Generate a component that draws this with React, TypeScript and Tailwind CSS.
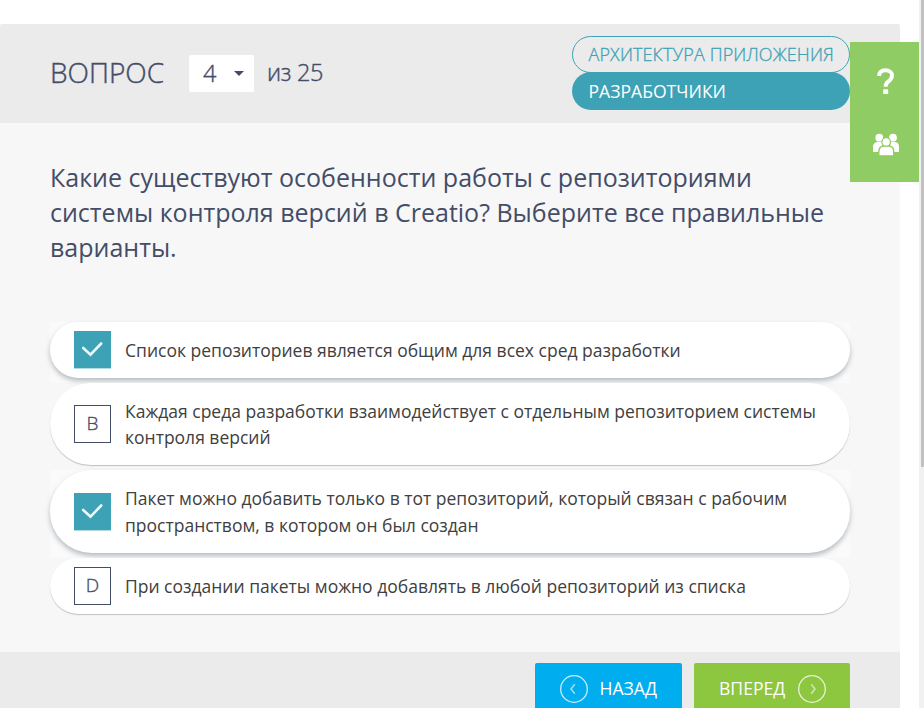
import React from "react";

type Option = { letter: string; lines: string[]; selected: boolean; size: string; text: string; box: string };

const options: Option[] = [
  {
    letter: "A",
    lines: ["Список репозиториев является общим для всех сред разработки"],
    selected: true,
    size: "h-[56px]",
    text: "pt-[15px] leading-[27px]",
    box: "mt-[9px]",
  },
  {
    letter: "B",
    lines: ["Каждая среда разработки взаимодействует с отдельным репозиторием системы", "контроля версий"],
    selected: false,
    size: "h-[82px]",
    text: "pt-[15px] leading-[26px]",
    box: "mt-[22px]",
  },
  {
    letter: "C",
    lines: ["Пакет можно добавить только в тот репозиторий, который связан с рабочим", "пространством, в котором он был создан"],
    selected: true,
    size: "h-[83px]",
    text: "pt-[15px] leading-[27px]",
    box: "mt-[23px]",
  },
  {
    letter: "D",
    lines: ["При создании пакеты можно добавлять в любой репозиторий из списка"],
    selected: false,
    size: "h-[56px]",
    text: "pt-[15px] leading-[27px]",
    box: "mt-[9px]",
  },
];

function Check() {
  return (
    <svg width="37" height="37" viewBox="0 0 37 37" fill="none">
      <path d="M9.2 17L16.5 23.7L27.2 12.500" stroke="#eef8fa" strokeWidth="2.6" strokeLinecap="round" strokeLinejoin="miter" />
    </svg>
  );
}

function OptionRow({ option }: { option: Option }) {
  return (
    <div className={`pb-[5px] ${option.selected ? "bg-[#fafafa]" : ""}`}>
      <div
        className={`flex rounded-full bg-white pl-6 ${option.size} ${
          option.selected ? "shadow-[0_3px_5px_rgba(60,75,90,0.35)]" : "shadow-[0_1px_1px_rgba(60,70,70,0.3)]"
        }`}
      >
        {option.selected ? (
          <div className={`h-[37px] w-[37px] shrink-0 bg-[#3ea2b6] shadow-[0_1px_0_#b2dae2] ${option.box}`}>
            <Check />
          </div>
        ) : (
          <div
            className={`flex h-[38px] w-[37px] shrink-0 items-center justify-center border border-[#434d68] pb-[2px] text-[19px] font-light text-[#434d68] [-webkit-text-stroke:0.35px] ${option.box}`}
          >
            {option.letter}
          </div>
        )}
        <div className={`ml-[14px] whitespace-nowrap text-[17.5px] text-[#404040] ${option.text}`}>
          {option.lines.map((line) => (
            <div key={line}>
              <span>{line}</span>
            </div>
          ))}
        </div>
      </div>
    </div>
  );
}

function Arrow({ flip }: { flip?: boolean }) {
  return (
    <svg width="28" height="28" viewBox="0 0 28 28" fill="none" stroke="#fff" className={flip ? "rotate-180" : ""}>
      <circle cx="14" cy="14" r="13.3" strokeWidth="1.3" strokeOpacity="0.8" />
      <path d="M14.8 9.2L11 14L14.8 18.8" strokeWidth="1.5" strokeOpacity="0.6" />
    </svg>
  );
}

export default function App() {
  return (
    <div className="relative flex h-[708px] w-[924px] overflow-hidden bg-white font-['Open_Sans',sans-serif] text-[#434d68]">
      <main className="mt-6 flex w-[900px] flex-col bg-[#f7f7f7]">
        <header className="flex h-[99px] shrink-0 rounded-t-[3px] bg-[#ebebeb] pl-[50px] pr-[50px]">
          <span className="w-[139px] whitespace-nowrap pt-[28px] text-[28px] font-light leading-[40px] [-webkit-text-stroke:0.4px]">
            <span>ВОПРОС</span>
          </span>
          <div className="mt-[31px] flex h-[37px] w-[65px] items-center rounded-[2px] bg-white pl-[14px]">
            <span className="w-[31px] text-[23.5px] font-light leading-[37px] [-webkit-text-stroke:0.4px]">4</span>
            <svg width="10" height="5" viewBox="0 0 10 5">
              <path d="M0 0H10L5 5Z" fill="#434d68" />
            </svg>
          </div>
          <span className="ml-[13px] whitespace-nowrap pt-[30px] text-[23.5px] font-light leading-[36px] tracking-[-0.3px] [-webkit-text-stroke:0.4px]">
            <span>из 25</span>
          </span>
          <div className="ml-auto mt-3 flex w-[278px] flex-col whitespace-nowrap">
            <div className="flex h-[37px] items-center rounded-full border border-[#3ea2b6] pl-[15.500px] text-[18px] font-light tracking-[0.12px] text-[#3ea2b6] [-webkit-text-stroke:0.3px]">
              <span>АРХИТЕКТУРА ПРИЛОЖЕНИЯ</span>
            </div>
            <div className="-mt-px flex h-[38px] items-center rounded-full bg-[#3ea2b6] pl-[16.500px] text-[17.6px] text-white">
              <span>РАЗРАБОТЧИКИ</span>
            </div>
          </div>
        </header>

        <section className="flex h-[529px] shrink-0 flex-col px-[50px]">
          <div className="h-[199px] whitespace-nowrap pt-[37px] text-[25px] leading-[35px]">
            <div><span>Какие существуют особенности работы с репозиториями</span></div>
            <div><span>системы контроля версий в Creatio? Выберите все правильные</span></div>
            <div><span>варианты.</span></div>
          </div>
          {options.map((o) => (
            <OptionRow key={o.letter} option={o} />
          ))}
        </section>

        <footer className="flex flex-1 justify-end gap-3 bg-[#ebebeb] pr-[50px] pt-[11px] text-[17.6px] text-white">
          <button className="flex h-[52px] w-[147px] items-center rounded-[2px] bg-[#00aeef] pl-[25px]">
            <Arrow />
            <span className="ml-[11.500px] pb-[2px]">НАЗАД</span>
          </button>
          <button className="flex h-[52px] w-[156px] items-center rounded-[2px] bg-[#8dc63f] pl-[25px]">
            <span className="w-[79px] pb-[2px] text-left">ВПЕРЕД</span>
            <Arrow flip />
          </button>
        </footer>
      </main>

      <aside className="absolute left-[850px] top-[42px] h-[140px] w-[69px] bg-[#8fcc63]">
        <svg width="69" height="140" viewBox="0 0 69 140" fill="#fff">
          <path d="M29.200 34C29.2 29.900 32 28.300 35.500 28.300C39.4 28.300 42 30.300 42 33.4C42 36.6 40.3 38 38.2 39.6C36.3 41 35.6 42 35.6 44.800" fill="none" stroke="#fff" strokeWidth="3.9" />
          <rect x="33.2" y="47.2" width="5" height="4.800" rx="0.8" />
          <circle cx="29.3" cy="95.700" r="3.900" />
          <circle cx="43" cy="95.700" r="3.900" />
          <path d="M23 110V104.500C23 101.500 25 100 28 100H32V110Z" />
          <path d="M49 110V104.500C49 101.500 47 100 44.300 100H40.300V110Z" />
          <path d="M28.800 114V110C28.800 105.900 31 104 34 104H38.500C41.500 104 43.800 105.900 43.800 110V114Z" stroke="#8fcc63" strokeWidth="1.4" />
          <circle cx="36.200" cy="99.900" r="4.300" stroke="#8fcc63" strokeWidth="1.2" />
        </svg>
      </aside>

      <div className="ml-auto h-[708px] w-[5px] bg-[#f1f1f1] pl-[2px]">
        <div className="h-[467px] w-[3px] bg-[#c1c1c1]" />
      </div>
    </div>
  );
}
